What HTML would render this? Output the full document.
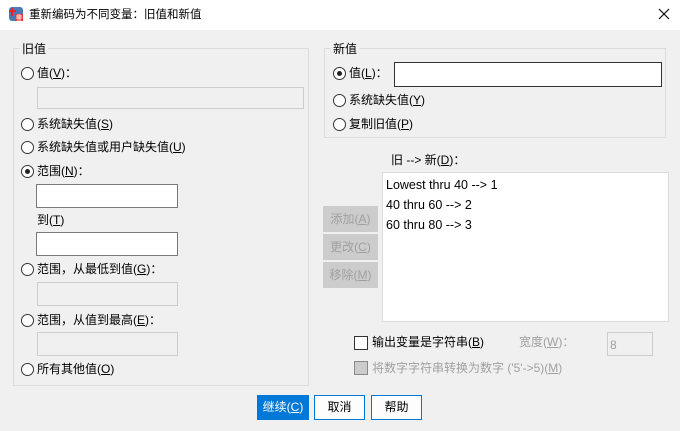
<!DOCTYPE html>
<html><head><meta charset="utf-8"><style>
*{margin:0;padding:0;box-sizing:border-box}
body{width:680px;height:431px;background:#f0f0f0;position:relative;overflow:hidden;font-family:"Liberation Sans","Noto Sans CJK SC",sans-serif;font-size:12px;color:#000}
.a{position:absolute;white-space:nowrap;line-height:14px}
.u{text-decoration:underline}
.dis{color:#a0a0a0}
.grp{position:absolute;border:1px solid #dcdcdc}
.lbl{position:absolute;background:#f0f0f0;padding:0 2px;line-height:14px}
.r{position:absolute;width:13px;height:13px;border:1px solid #333;border-radius:50%;background:#fff}
.r.on::after{content:"";position:absolute;left:3px;top:3px;width:5px;height:5px;border-radius:50%;background:#222}
.in{position:absolute;background:#fff;border:1px solid #7a7a7a}
.in.d{background:#f0f0f0;border-color:#ccc}
.btn{position:absolute;background:#ccc;color:#a0a0a0;text-align:center;line-height:26px}
.bb{position:absolute;border:1px solid #0078d7;background:#fdfdfd;text-align:center;line-height:23px;color:#000}
</style></head><body>
<div style="position:absolute;left:0;top:0;width:680px;height:30px;background:#fff"></div>
<svg class="a" style="left:8px;top:6px" width="16" height="16" viewBox="0 0 16 16"><rect x="1" y="1" width="14" height="14" rx="3" fill="#4a78b8"/><rect x="7" y="8" width="8" height="7" fill="#e33"/><path d="M4 2v8M1 5h7" stroke="#e22" stroke-width="2"/><path d="M8 10h6M8 12h6M10 8v7M12 8v7" stroke="#fff" stroke-width=".8"/></svg>
<div class="a" style="left:29px;top:8px;font-size:11.5px">重新编码为不同变量：旧值和新值</div>
<svg class="a" style="left:658px;top:8px" width="12" height="12"><path d="M1 1L11 11M11 1L1 11" stroke="#000" stroke-width="1.1"/></svg>

<div class="grp" style="left:13px;top:48px;width:296px;height:338px"></div>
<div class="lbl" style="left:20px;top:42px">旧值</div>
<div class="r" style="left:21px;top:67px"></div><div class="a" style="left:37px;top:66px">值(<span class="u">V</span>)：</div>
<div class="in d" style="left:37px;top:87px;width:267px;height:22px"></div>
<div class="r" style="left:21px;top:118px"></div><div class="a" style="left:37px;top:117px">系统缺失值(<span class="u">S</span>)</div>
<div class="r" style="left:21px;top:141px"></div><div class="a" style="left:37px;top:140px">系统缺失值或用户缺失值(<span class="u">U</span>)</div>
<div class="r on" style="left:21px;top:165px"></div><div class="a" style="left:37px;top:164px">范围(<span class="u">N</span>)：</div>
<div class="in" style="left:36px;top:184px;width:142px;height:24px"></div>
<div class="a" style="left:37px;top:213px">到(<span class="u">T</span>)</div>
<div class="in" style="left:36px;top:232px;width:142px;height:24px"></div>
<div class="r" style="left:21px;top:263px"></div><div class="a" style="left:37px;top:262px">范围，从最低到值(<span class="u">G</span>)：</div>
<div class="in d" style="left:37px;top:282px;width:141px;height:24px"></div>
<div class="r" style="left:21px;top:314px"></div><div class="a" style="left:37px;top:313px">范围，从值到最高(<span class="u">E</span>)：</div>
<div class="in d" style="left:37px;top:332px;width:141px;height:24px"></div>
<div class="r" style="left:21px;top:363px"></div><div class="a" style="left:37px;top:362px">所有其他值(<span class="u">O</span>)</div>

<div class="grp" style="left:324px;top:48px;width:342px;height:90px"></div>
<div class="lbl" style="left:331px;top:42px">新值</div>
<div class="r on" style="left:333px;top:67px"></div><div class="a" style="left:349px;top:66px">值(<span class="u">L</span>)：</div>
<div class="in" style="left:394px;top:62px;width:268px;height:25px;border-color:#333"></div>
<div class="r" style="left:333px;top:94px"></div><div class="a" style="left:349px;top:93px">系统缺失值(<span class="u">Y</span>)</div>
<div class="r" style="left:333px;top:118px"></div><div class="a" style="left:349px;top:117px">复制旧值(<span class="u">P</span>)</div>

<div class="a" style="left:391px;top:153px">旧 --&gt; 新(<span class="u">D</span>)：</div>
<div class="in" style="left:382px;top:172px;width:287px;height:150px;border-color:#dcdcdc"></div>
<div class="a" style="left:386px;top:178px;font-size:12.5px">Lowest thru 40 --&gt; 1</div>
<div class="a" style="left:386px;top:198px;font-size:12.5px">40 thru 60 --&gt; 2</div>
<div class="a" style="left:386px;top:218px;font-size:12.5px">60 thru 80 --&gt; 3</div>
<div class="btn" style="left:323px;top:206px;width:55px;height:26px">添加(<span class="u">A</span>)</div>
<div class="btn" style="left:323px;top:234px;width:55px;height:26px">更改(<span class="u">C</span>)</div>
<div class="btn" style="left:323px;top:262px;width:55px;height:26px">移除(<span class="u">M</span>)</div>

<div style="position:absolute;left:354px;top:336px;width:14px;height:14px;border:1px solid #333;background:#fff"></div>
<div class="a" style="left:372px;top:335px">输出变量是字符串(<span class="u">B</span>)</div>
<div class="a dis" style="left:519px;top:335px">宽度(<span class="u">W</span>)：</div>
<div class="in d" style="left:607px;top:332px;width:46px;height:24px"></div>
<div class="a dis" style="left:610px;top:338px">8</div>
<div style="position:absolute;left:354px;top:361px;width:14px;height:14px;border:1px solid #888;background:#ccc"></div>
<div class="a dis" style="left:372px;top:361px">将数字字符串转换为数字 ('5'-&gt;5)(<span class="u">M</span>)</div>

<div class="bb" style="left:257px;top:395px;width:52px;height:25px;background:#0078d7;color:#fff">继续(<span class="u">C</span>)</div>
<div class="bb" style="left:314px;top:395px;width:51px;height:25px">取消</div>
<div class="bb" style="left:371px;top:395px;width:51px;height:25px">帮助</div>
</body></html>
